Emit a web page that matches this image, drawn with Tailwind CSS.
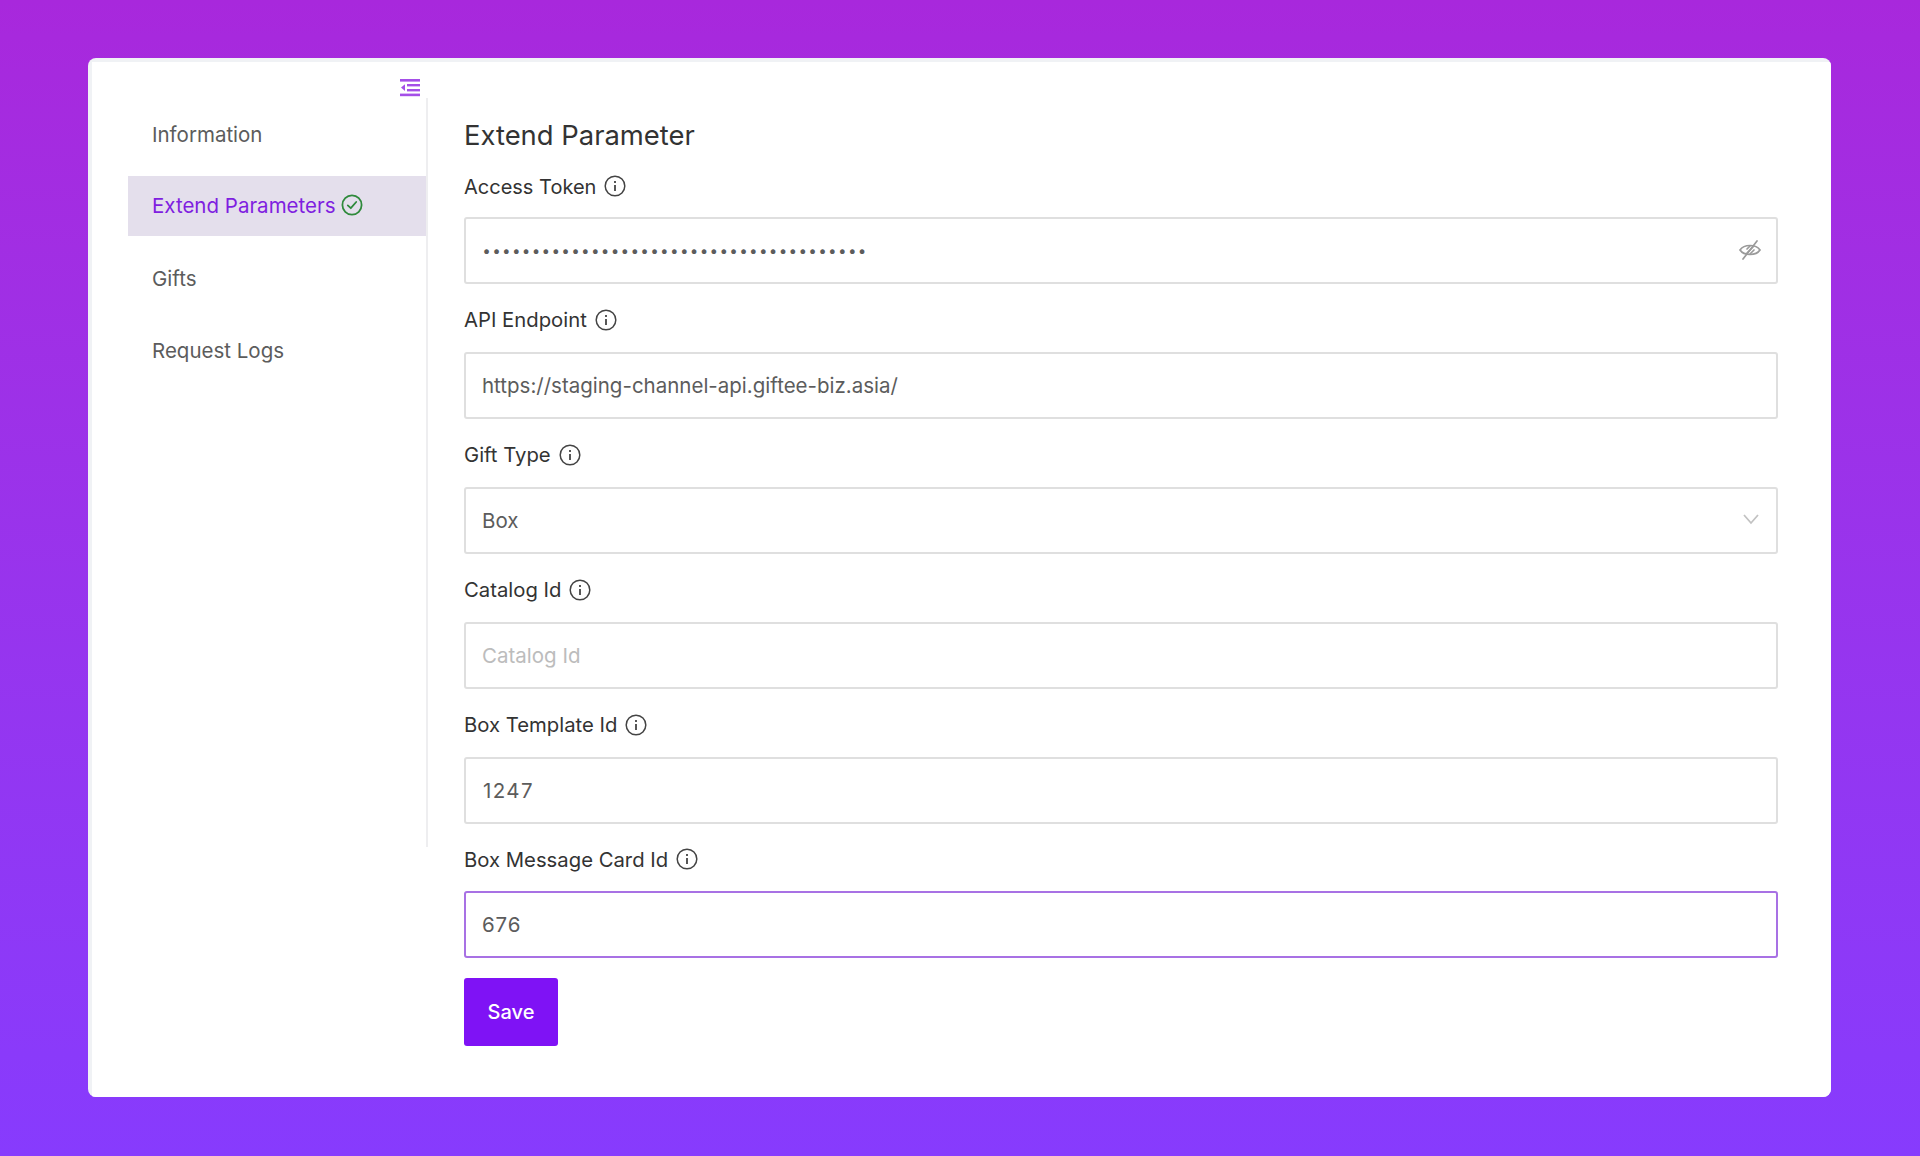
<!DOCTYPE html>
<html lang="en">
<head>
    <meta charset="UTF-8">
    <title>Extend Parameter</title>
    <script src="https://cdn.jsdelivr.net/npm/@tailwindcss/browser@4"></script>
</head>
<body class="h-[1156px] overflow-hidden bg-gradient-to-b from-[#a828dc] to-[#873bfd] font-['Inter','Noto_Sans',sans-serif]">
    <div class="pt-[58px] pl-[88px]">
        <div class="w-[1743px] h-[1039px] bg-[#f0f2f5] rounded-lg pl-1 pt-1 overflow-hidden">
            <div class="h-full bg-white flex">
                <!-- sidebar -->
                <aside class="w-[336px] pl-9 shrink-0">
                    <div class="h-9 flex justify-end pr-2 items-end">
                        <svg class="w-5 h-[19px]" viewBox="0 0 20 19" fill="#a54fe8">
                            <rect x="0" y="0" width="20" height="2.6"/>
                            <rect x="7" y="5" width="13" height="2.4"/>
                            <rect x="7" y="10" width="13" height="2.4"/>
                            <rect x="0" y="14.6" width="20" height="2.6"/>
                            <path d="M5 5.2 L1 8.6 L5 12 Z"/>
                        </svg>
                    </div>
                    <nav class="border-r-2 border-[#eeeef0] h-[749px] text-[20.5px] text-[#5c5c5c]">
                        <div class="h-[78px] pl-6 flex items-center pb-1">Information</div>
                        <div class="h-[60px] pl-6 flex items-center gap-[5px] bg-[#e4dfec] text-[#7f1ee0]">
                            Extend Parameters
                            <svg class="w-[22px] h-[22px] mb-[2px]" viewBox="0 0 22 22" fill="none" stroke="#2f8a3c" stroke-width="1.8" stroke-linecap="round" stroke-linejoin="round">
                                <circle cx="11" cy="11" r="9.6"/>
                                <path d="M6.8 11.4 L9.8 14.2 L15.2 8"/>
                            </svg>
                        </div>
                        <div class="h-[84px] pl-6 flex items-center pt-[2px]">Gifts</div>
                        <div class="h-[60px] pl-6 flex items-center pt-[2px]">Request Logs</div>
                    </nav>
                </aside>
                <!-- form -->
                <main class="w-[1314px] ml-9 shrink-0">
                    <h1 class="text-[27.4px] leading-[38px] text-[#333333] mt-[54px]">Extend Parameter</h1>
                    <div class="mt-[7px] text-[20.5px] text-[#333333]">
                        <label class="h-[56px] pb-1 flex items-center gap-2 text-[20px]">
                            Access Token
                            <svg class="w-[22px] h-[22px] mb-[2px]" viewBox="0 0 22 22" fill="none" stroke="#444444" stroke-width="1.5"><circle cx="11" cy="11" r="9.8"/><path d="M11 10 V16" stroke-width="1.8"/><path d="M11 6 V8" stroke-width="1.8"/></svg>
                        </label>
                        <div class="h-[67px] border-2 border-[#dfdfdf] rounded-[3px] flex items-center justify-between pl-[17px] pr-[14px] text-[#5c5c5c]">
                            <span class="tracking-[2.77px] text-[15px] font-bold text-[#5c5c5c] mt-[1px]">•••••••••••••••••••••••••••••••••••••••</span>
                            <svg class="w-6 h-6 mb-[2px]" viewBox="0 0 24 24" fill="none" stroke="#9a9a9a" stroke-width="1.7" stroke-linecap="round"><path d="M2 12 C6 6 18 6 22 12 C18 18 6 18 2 12 Z"/><path d="M9 15 L15 9 M9 11 L12 8 M12 16 L16 12"/><path d="M5 21 L19 3"/></svg>
                        </div>
                        <label class="h-[68px] pt-[5px] flex items-center gap-2 text-[20.3px]">
                            API Endpoint
                            <svg class="w-[22px] h-[22px] mb-[2px]" viewBox="0 0 22 22" fill="none" stroke="#444444" stroke-width="1.5"><circle cx="11" cy="11" r="9.8"/><path d="M11 10 V16" stroke-width="1.8"/><path d="M11 6 V8" stroke-width="1.8"/></svg>
                        </label>
                        <div class="h-[67px] border-2 border-[#dfdfdf] rounded-[3px] flex items-center pl-4 pt-[2px] text-[#5c5c5c]">https://staging-channel-api.giftee-biz.asia/</div>
                        <label class="h-[68px] pt-[5px] flex items-center gap-2 text-[20.3px]">
                            Gift Type
                            <svg class="w-[22px] h-[22px] mb-[2px]" viewBox="0 0 22 22" fill="none" stroke="#444444" stroke-width="1.5"><circle cx="11" cy="11" r="9.8"/><path d="M11 10 V16" stroke-width="1.8"/><path d="M11 6 V8" stroke-width="1.8"/></svg>
                        </label>
                        <div class="h-[67px] border-2 border-[#dfdfdf] rounded-[3px] flex items-center justify-between pl-4 pr-4 pt-[2px] text-[#5c5c5c]">
                            Box
                            <svg class="w-[18px] h-[12px] mb-[6px]" viewBox="0 0 18 12" fill="none" stroke="#c2c2c2" stroke-width="1.8"><path d="M2 2 L9 10 L16 2"/></svg>
                        </div>
                        <label class="h-[68px] pt-[5px] flex items-center gap-2 text-[20.3px]">
                            Catalog Id
                            <svg class="w-[22px] h-[22px] mb-[2px]" viewBox="0 0 22 22" fill="none" stroke="#444444" stroke-width="1.5"><circle cx="11" cy="11" r="9.8"/><path d="M11 10 V16" stroke-width="1.8"/><path d="M11 6 V8" stroke-width="1.8"/></svg>
                        </label>
                        <div class="h-[67px] border-2 border-[#dfdfdf] rounded-[3px] flex items-center pl-4 pt-[2px] text-[#bcbcbc]">Catalog Id</div>
                        <label class="h-[68px] pt-[5px] flex items-center gap-2 text-[20.3px]">
                            Box Template Id
                            <svg class="w-[22px] h-[22px] mb-[2px]" viewBox="0 0 22 22" fill="none" stroke="#444444" stroke-width="1.5"><circle cx="11" cy="11" r="9.8"/><path d="M11 10 V16" stroke-width="1.8"/><path d="M11 6 V8" stroke-width="1.8"/></svg>
                        </label>
                        <div class="h-[67px] border-2 border-[#dfdfdf] rounded-[3px] flex items-center pl-[17px] pt-[2px] text-[#5c5c5c] tracking-[1.4px]">1247</div>
                        <label class="h-[67px] pt-[5px] flex items-center gap-2 text-[20.3px]">
                            Box Message Card Id
                            <svg class="w-[22px] h-[22px] mb-[2px]" viewBox="0 0 22 22" fill="none" stroke="#444444" stroke-width="1.5"><circle cx="11" cy="11" r="9.8"/><path d="M11 10 V16" stroke-width="1.8"/><path d="M11 6 V8" stroke-width="1.8"/></svg>
                        </label>
                        <div class="h-[67px] border-2 border-[#a871e4] rounded-[3px] flex items-center pl-4 pt-[2px] text-[#5c5c5c] tracking-[0.9px]">676</div>
                        <button class="mt-5 w-[94px] h-[68px] bg-[#7f12f5] text-white font-medium rounded-[3px] text-[20px]">Save</button>
                    </div>
                </main>
            </div>
        </div>
    </div>
</body>
</html>
